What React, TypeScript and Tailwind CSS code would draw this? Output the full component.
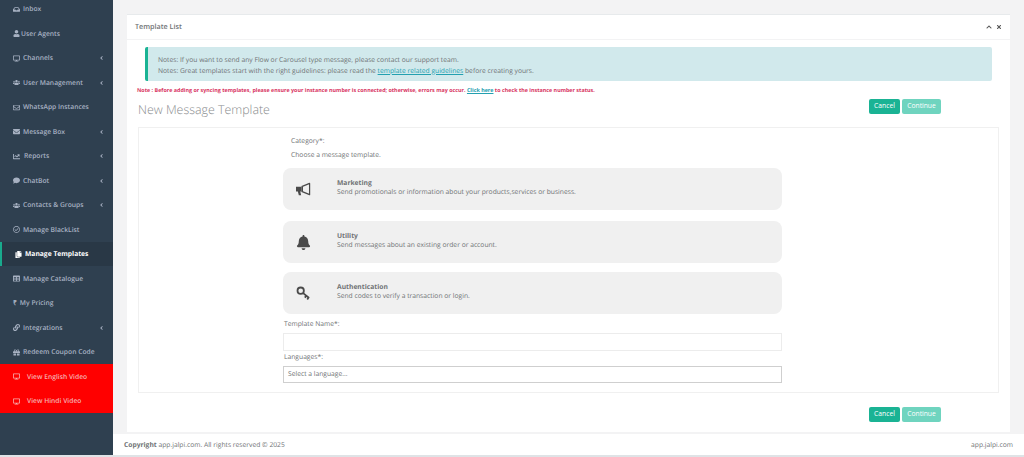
import {
  FaBell,
  FaChartLine,
  FaChevronUp,
  FaComment,
  FaCopy,
  FaDesktop,
  FaEnvelope,
  FaGift,
  FaInbox,
  FaLink,
  FaRegEnvelope,
  FaRegCheckCircle,
  FaTable,
  FaTimes,
  FaUser,
  FaUsers,
  FaAngleLeft,
} from "react-icons/fa";
import type { IconType } from "react-icons";

interface NavItem {
  label: string;
  icon?: IconType;
  glyph?: string;
  gap: string;
  arrow?: boolean;
  active?: boolean;
  video?: boolean;
}

const navItems: NavItem[] = [
  { label: "Inbox", icon: FaInbox, gap: "gap-[3px]" },
  { label: "User Agents", icon: FaUser, gap: "gap-[1px]" },
  { label: "Channels", icon: FaDesktop, gap: "gap-[3px]", arrow: true },
  { label: "User Management", icon: FaUsers, gap: "gap-[3px]", arrow: true },
  { label: "WhatsApp Instances", icon: FaRegEnvelope, gap: "gap-[3px]" },
  { label: "Message Box", icon: FaEnvelope, gap: "gap-[3px]", arrow: true },
  { label: "Reports", icon: FaChartLine, gap: "gap-[4px]", arrow: true },
  { label: "ChatBot", icon: FaComment, gap: "gap-[3px]", arrow: true },
  { label: "Contacts & Groups", icon: FaUsers, gap: "gap-[3px]", arrow: true },
  { label: "Manage BlackList", icon: FaRegCheckCircle, gap: "gap-[3px]" },
  { label: "Manage Templates", icon: FaCopy, gap: "gap-[3px]", active: true },
  { label: "Manage Catalogue", icon: FaTable, gap: "gap-[3px]" },
  { label: "My Pricing", glyph: "₹", gap: "gap-[3px]" },
  { label: "Integrations", icon: FaLink, gap: "gap-[3px]", arrow: true },
  { label: "Redeem Coupon Code", icon: FaGift, gap: "gap-[3px]" },
  { label: "View English Video", icon: FaDesktop, gap: "gap-[7px]", video: true },
  { label: "View Hindi Video", icon: FaDesktop, gap: "gap-[7px]", video: true },
];

const BullhornIcon = ({ className }: { className: string }) => (
  <svg viewBox="0 0 16 14" className={className} fill="none">
    <path d="M0 4h6v5H4.5l1 4H3l-1-4H0z" fill="currentColor" />
    <path d="M6 4l8.5-3.5v12L6 9" stroke="currentColor" strokeWidth="1.3" strokeLinejoin="round" />
    <path d="M6 4h1.5v5H6z" fill="currentColor" />
  </svg>
);

const KeyIcon = ({ className }: { className: string }) => (
  <svg viewBox="0 0 16 16" className={className} fill="none" stroke="currentColor">
    <circle cx="5" cy="5" r="3.4" strokeWidth="1.9" />
    <path d="M7.6 7.6l6.4 5.2M11 10.4l-1.6 2M13.4 12.3l-1.4 2" strokeWidth="1.9" />
  </svg>
);

const categories = [
  {
    title: "Marketing",
    text: "Send promotionals or information about your products,services or business.",
    icon: BullhornIcon,
    margin: "mb-[11px]",
  },
  {
    title: "Utility",
    text: "Send messages about an existing order or account.",
    icon: FaBell,
    margin: "mb-[9px]",
  },
  {
    title: "Authentication",
    text: "Send codes to verify a transaction or login.",
    icon: KeyIcon,
    margin: "mb-[5px]",
  },
];

const Sidebar = () => (
  <aside className="w-[113px] h-full shrink-0 bg-[#2f4050] overflow-hidden">
    <ul className="-mt-[3.5px] text-[6.72px] font-semibold text-[#a7b1c2]">
      {navItems.map((item) => {
        const Icon = item.icon;
        return (
          <li
            key={item.label}
            className={`h-[24.5px] pt-[1px] pl-[13px] pr-[9px] flex items-center ${item.gap} ${
              item.video ? "bg-[#ff0000] text-[#f7b0b0]" : ""
            } ${item.active ? "bg-[#293846] text-white font-bold border-l-[2px] border-[#19aa8d]" : ""}`}
          >
            {Icon ? <Icon className="w-[7px] h-[7px] shrink-0" /> : <span>{item.glyph}</span>}
            <span className="whitespace-nowrap">{item.label}</span>
            {item.arrow && <FaAngleLeft className="ml-auto w-[5px] h-[6px]" />}
          </li>
        );
      })}
    </ul>
  </aside>
);

const Buttons = () => (
  <div className="flex gap-[2px] text-[6.72px] text-white">
    <button className="w-[31px] h-[15px] rounded-[2px] bg-[#1ab394]">Cancel</button>
    <button className="w-[39px] h-[15px] rounded-[2px] bg-[#6fd4bf]">Continue</button>
  </div>
);

export default function App() {
  return (
    <div className="w-[1024px] h-[457px] flex overflow-hidden border-b-[2px] border-[#dfe3e6] bg-[#f3f3f4] text-[#6f7274] font-['Open_Sans',sans-serif] [text-rendering:geometricPrecision]">
      <Sidebar />
      <main className="flex-1 flex flex-col min-w-0">
        <div className="flex-1 pt-[14px] pl-[14px] pr-[14px] min-h-0">
          <section className="h-[418px] bg-white border-t border-[#e7eaec]">
            <header className="h-[25px] flex items-center justify-between px-[8px] border-b border-[#f3f3f4] text-[7.2px] font-semibold">
              <span>Template List</span>
              <span className="flex gap-[4px] items-center text-[#555]">
                <FaChevronUp className="w-[6px] h-[6px]" />
                <FaTimes className="w-[6px] h-[6px]" />
              </span>
            </header>
            <div className="pt-[7px] pl-[10px] pr-[11px]">
              <div className="ml-[8px] mr-[7px] h-[34px] pt-[1px] bg-[#d1e9ec] border-l-[3px] border-[#1ab394] rounded-[2px] pl-[10px] flex flex-col justify-center text-[6.72px] leading-[11px]">
                <p>Notes: If you want to send any Flow or Carousel type message, please contact our support team.</p>
                <p>
                  Notes: Great templates start with the right guidelines: please read the{" "}
                  <a className="underline text-[#23a0b0]">template related guidelines</a> before creating yours.
                </p>
              </div>
              <p className="mt-[5px] text-[5.39px] leading-[8px] font-bold text-[#d8345f]">
                Note : Before adding or syncing templates, please ensure your instance number is connected; otherwise, errors may occur.{" "}
                <a className="underline text-[#23a0b0]">Click here</a> to check the instance number status.
              </p>
              <div className="mt-[4px] pl-[1px] pr-[58px] h-[22px] flex items-center justify-between">
                <h1 className="mt-[2px] text-[12.4px] font-light text-[#8a8c8e]">New Message Template</h1>
                <div className="mb-[6px]">
                  <Buttons />
                </div>
              </div>
              <div className="mt-[7px] ml-[1px] h-[266px] border border-[#f0f0f0] pl-[144px]">
                <div className="w-[499px] text-[6.72px]">
                  <p className="ml-[8px] mt-[8px] leading-[10px]">Category*:</p>
                  <p className="ml-[8px] mt-[4px] mb-[8px] leading-[10px]">Choose a message template.</p>
                  {categories.map((c) => (
                    <div
                      key={c.title}
                      className={`h-[42px] bg-[#f0f0f0] rounded-[8px] flex items-center ${c.margin}`}
                    >
                      <c.icon className="ml-[13px] w-[15px] h-[15px] text-[#4a4a4a]" />
                      <div className="ml-[26px] mb-[5px] leading-[9px]">
                        <p className="font-bold">{c.title}</p>
                        <p>{c.text}</p>
                      </div>
                    </div>
                  ))}
                  <p className="leading-[9px] ml-[1px]">Template Name*:</p>
                  <div className="mt-[5px] h-[18px] bg-white border border-[#ececec]" />
                  <p className="mt-[1px] leading-[9px] ml-[1px]">Languages*:</p>
                  <div className="mt-[5px] h-[17px] bg-white border border-[#cfcfcf] pl-[4px] flex items-center">
                    Select a language...
                  </div>
                </div>
              </div>
              <div className="mt-[14px] pr-[58px] flex justify-end">
                <Buttons />
              </div>
            </div>
          </section>
        </div>
        <footer className="h-[21px] pt-[2px] bg-white flex items-center justify-between pl-[11px] pr-[11px] text-[6.72px]">
          <span>
            <b>Copyright</b> app.jalpi.com. All rights reserved © 2025
          </span>
          <span>app.jalpi.com</span>
        </footer>
      </main>
    </div>
  );
}
